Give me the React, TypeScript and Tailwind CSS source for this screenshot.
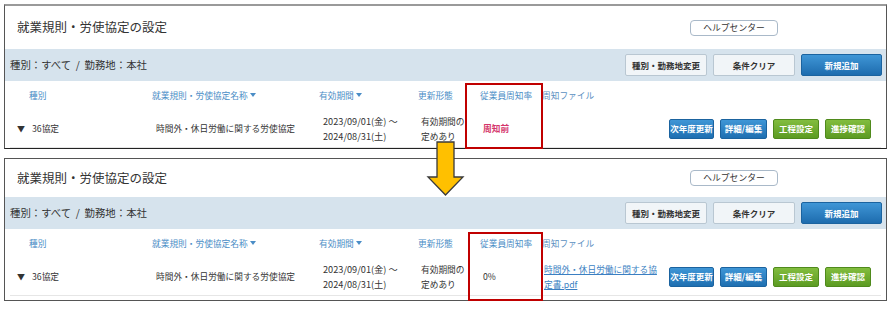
import React from "react";

const font = {
  fontFamily: '"Noto Sans CJK JP", "Noto Sans", sans-serif',
};

const Caret = () => (
  <span className="inline-block ml-[2px] align-[2px] w-0 h-0 border-x-[3.5px] border-x-transparent border-t-[4px] border-t-[#4a8dc6]" />
);

const BlueBtn = ({ label, w }: { label: string; w: string }) => (
  <span
    className={`${w} h-[20px] flex items-center justify-center rounded-[2px] border border-[#1b639f] bg-gradient-to-b from-[#3f96d6] to-[#1e6fb1] text-[8.5px] font-bold text-white`}
  >
    {label}
  </span>
);

const GreenBtn = ({ label }: { label: string }) => (
  <span className="w-[46px] h-[20px] flex items-center justify-center rounded-[2px] border border-[#4f8a1c] bg-gradient-to-b from-[#82bd3e] to-[#5c9b22] text-[8.5px] font-bold text-white">
    {label}
  </span>
);

type PanelProps = {
  variant: "before" | "after";
};

const Panel = ({ variant }: PanelProps) => {
  const before = variant === "before";
  return (
    <div
      className={
        before
          ? "w-[883px] h-[145px] border-x border-b border-x-[#555] border-b-[#222] border-t-[2px] border-t-[#9a9a9a] flex flex-col overflow-hidden bg-white"
          : "w-[883px] h-[143px] border border-[#555] flex flex-col overflow-hidden bg-white"
      }
    >
      {/* title */}
      <div
        className={`${before ? "h-[43px]" : "h-[38px]"} shrink-0 flex items-center justify-between pl-[12px] pr-[108px]`}
      >
        <h1 className="text-[12.5px] text-[#333] leading-none">就業規則・労使協定の設定</h1>
        <span className="w-[88px] h-[16px] flex items-center justify-center rounded-[4px] border border-[#a9b9c9] bg-white text-[8.8px] text-[#333]">
          ヘルプセンター
        </span>
      </div>

      {/* filter bar */}
      <div className="h-[32px] shrink-0 bg-[#d6e3ed] flex items-center justify-between pl-[5px] pr-[4px]">
        <span className="text-[10.4px] text-[#333]">種別：すべて&nbsp;&nbsp;/&nbsp;&nbsp;勤務地：本社</span>
        <div className="flex gap-[6px]">
          <span className="w-[82px] h-[22px] flex items-center justify-center rounded-[2px] border border-[#b9c7d2] bg-[#f1f5f8] text-[8.5px] font-bold text-[#333]">
            種別・勤務地変更
          </span>
          <span className="w-[82px] h-[22px] flex items-center justify-center rounded-[2px] border border-[#b9c7d2] bg-[#f1f5f8] text-[8.5px] font-bold text-[#333]">
            条件クリア
          </span>
          <span className="w-[81px] h-[22px] flex items-center justify-center rounded-[2px] border border-[#1b639f] bg-gradient-to-b from-[#3f96d6] to-[#1d6cae] text-[8.5px] font-bold text-white">
            新規追加
          </span>
        </div>
      </div>

      {/* header row */}
      <div className="h-[29px] shrink-0 grid grid-cols-[143px_167px_99px_62px_63px_126px_1fr] items-center text-[8.7px] text-[#4a8dc6]">
        <span className="pl-[24px]">種別</span>
        <span className="pl-[4px]">
          就業規則・労使協定名称<Caret />
        </span>
        <span className="pl-[4px]">
          有効期間<Caret />
        </span>
        <span className="pl-[4px]">更新形態</span>
        <span className="pl-[4px]">従業員周知率</span>
        <span className="pl-[3px] text-[#5a8fbf]">周知ファイル</span>
        <span />
      </div>

      {/* data row */}
      <div className="mx-[5px] h-[38px] shrink-0 border-b border-[#e6e6e6] grid grid-cols-[138px_167px_99px_62px_63px_126px_1fr] items-center text-[8.7px] text-[#333] leading-[15px]">
        <span className="pl-[7px] flex items-center gap-[7px]">
          <span className="text-[8px]">▼</span>
          <span>36協定</span>
        </span>
        <span className="pl-[8px]">時間外・休日労働に関する労使協定</span>
        <span className="pl-[8px] text-[9.2px]">
          2023/09/01(金) ～
          <br />
          2024/08/31(土)
        </span>
        <span className="pl-[7px]">
          有効期間の
          <br />
          定めあり
        </span>
        <span className="pl-[7px]">
          {before ? (
            <span className="font-bold text-[#d4356b]">周知前</span>
          ) : (
            <span>0%</span>
          )}
        </span>
        <span className="pl-[5px]">
          {before ? null : (
            <span className="text-[#3b7fc2] underline">
              時間外・休日労働に関する協
              <br />
              定書.pdf
            </span>
          )}
        </span>
        <span className="pl-[4px] flex gap-[6px]">
          <BlueBtn label="次年度更新" w="w-[45px]" />
          <BlueBtn label="詳細/編集" w="w-[47px]" />
          <GreenBtn label="工程設定" />
          <GreenBtn label="進捗確認" />
        </span>
      </div>
    </div>
  );
};

export default function App() {
  return (
    <div className="relative w-[895px] h-[311px] bg-white pl-[4px] pt-[4px] flex flex-col gap-[9px]" style={font}>
      <Panel variant="before" />
      <Panel variant="after" />

      {/* highlight boxes */}
      <div className="absolute left-[465px] top-[83px] w-[78px] h-[66px] border-[2.5px] border-[#c00000]" />
      <div className="absolute left-[468px] top-[232px] w-[75px] h-[69px] border-[2.5px] border-[#c00000]" />

      {/* arrow */}
      <svg className="absolute left-[426px] top-[141px]" width="40" height="56" viewBox="0 0 40 56">
        <path
          d="M11 1 H28 V36 H37 L19.5 54 L2 36 H11 Z"
          fill="#ffc000"
          stroke="#3a3a3a"
          strokeWidth="1.3"
          strokeLinejoin="miter"
        />
      </svg>
    </div>
  );
}
